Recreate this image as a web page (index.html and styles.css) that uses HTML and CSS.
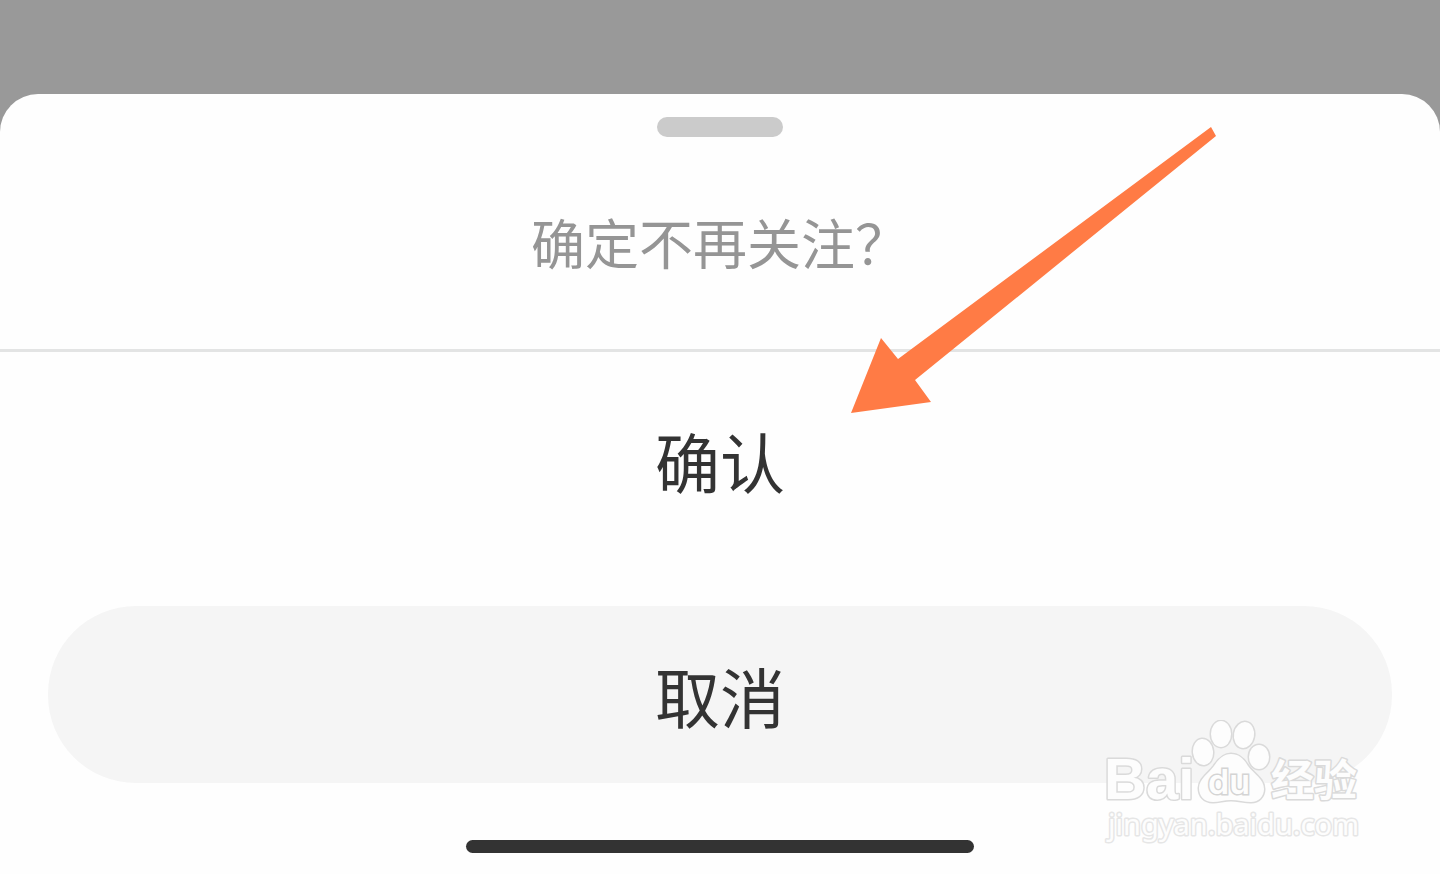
FILE: index.html
```html
<!DOCTYPE html>
<html lang="zh-CN">
<head>
<meta charset="utf-8">
<meta name="viewport" content="width=device-width, initial-scale=1">
<title>确定不再关注？</title>
<link rel="stylesheet" href="styles.css">
</head>
<body>
<main class="sheet" role="dialog" aria-labelledby="sheet-title">
  <div class="grabber"></div>
  <h1 class="title" id="sheet-title">确定不再关注？</h1>
  <button class="action confirm" type="button">确认</button>
  <button class="action cancel" type="button">取消</button>
  <div class="home-bar"></div>
  <svg class="arrow" viewBox="0 0 366 286" aria-hidden="true">
    <path d="M360 0 365 9 64 253 80 275 0 286 30 211 47 232Z"/>
  </svg>
  <svg class="watermark" viewBox="0 0 270 134" aria-hidden="true">
    <g class="mark">
      <text class="latin" x="4" y="79">Bai</text>
      <ellipse cx="103" cy="32" rx="10" ry="13" transform="rotate(-6 103 32)"/>
      <ellipse cx="121" cy="14" rx="10" ry="13"/>
      <ellipse cx="144" cy="15" rx="10" ry="13" transform="rotate(10 144 15)"/>
      <ellipse cx="159" cy="37" rx="10" ry="12"/>
      <path d="M131 34C123 34 118 40 114 46C109 53 99 59 99 68C99 76 104 82 113 82C119 82 124 80 131 80C138 80 144 82 151 82C159 82 164 76 164 69C164 59 154 54 148 46C144 39 139 34 131 34Z"/>
      <text class="han" x="171" y="76">经验</text>
      <text class="domain" x="8" y="115">jingyan.baidu.com</text>
    </g>
    <text class="du" x="108" y="74">du</text>
  </svg>
</main>
</body>
</html>
```
FILE: styles.css
```css
* {
  box-sizing: border-box;
}

body {
  margin: 0;
  min-height: 100vh;
  padding-top: 94px;
  display: flex;
  background: #999;
  font-family: "Noto Sans CJK SC", sans-serif;
}

.sheet {
  position: relative;
  flex: 1;
  display: flex;
  flex-direction: column;
  padding-bottom: 21px;
  background: #fefefe;
  border-radius: 38px 38px 0 0;
}

.grabber {
  width: 126px;
  height: 20px;
  margin: 23px auto 0;
  border-radius: 10px;
  background: #cbcbcb;
}

.title {
  margin: 0;
  padding: 64px 0 66px;
  border-bottom: 3px solid #e3e4e4;
  color: #959595;
  font-size: 54px;
  font-weight: 400;
  line-height: 82px;
  text-align: center;
}

.action {
  border: 0;
  padding: 0;
  background: none;
  color: #333;
  font: inherit;
  font-size: 65px;
  line-height: 96px;
  text-align: center;
}

.confirm {
  height: 224px;
  padding-bottom: 8px;
}

.cancel {
  height: 177px;
  margin: 30px 48px 0;
  border-radius: 88px;
  background: #f5f5f5;
}

.home-bar {
  width: 508px;
  height: 13px;
  margin: auto auto 0;
  border-radius: 7px;
  background: #333;
}

.arrow {
  position: absolute;
  top: 33px;
  right: 223px;
  width: 366px;
  fill: #ff7b45;
}

.watermark {
  position: absolute;
  right: 70px;
  bottom: 20px;
  width: 270px;
}

.mark {
  fill: #fdfdfd;
  stroke: #dadada;
  stroke-width: 3px;
  stroke-linejoin: round;
  paint-order: stroke;
}

.latin {
  font: 700 58px "Liberation Sans", sans-serif;
}

.han {
  font: 700 43px "Noto Sans CJK SC", sans-serif;
}

.domain {
  font: 400 29px "Noto Sans", sans-serif;
  stroke: #e6e6e6;
}

.du {
  fill: #fdfdfd;
  stroke: #d4d4d4;
  stroke-width: 3px;
  paint-order: stroke;
  font: 600 34px Inter, sans-serif;
}
```
